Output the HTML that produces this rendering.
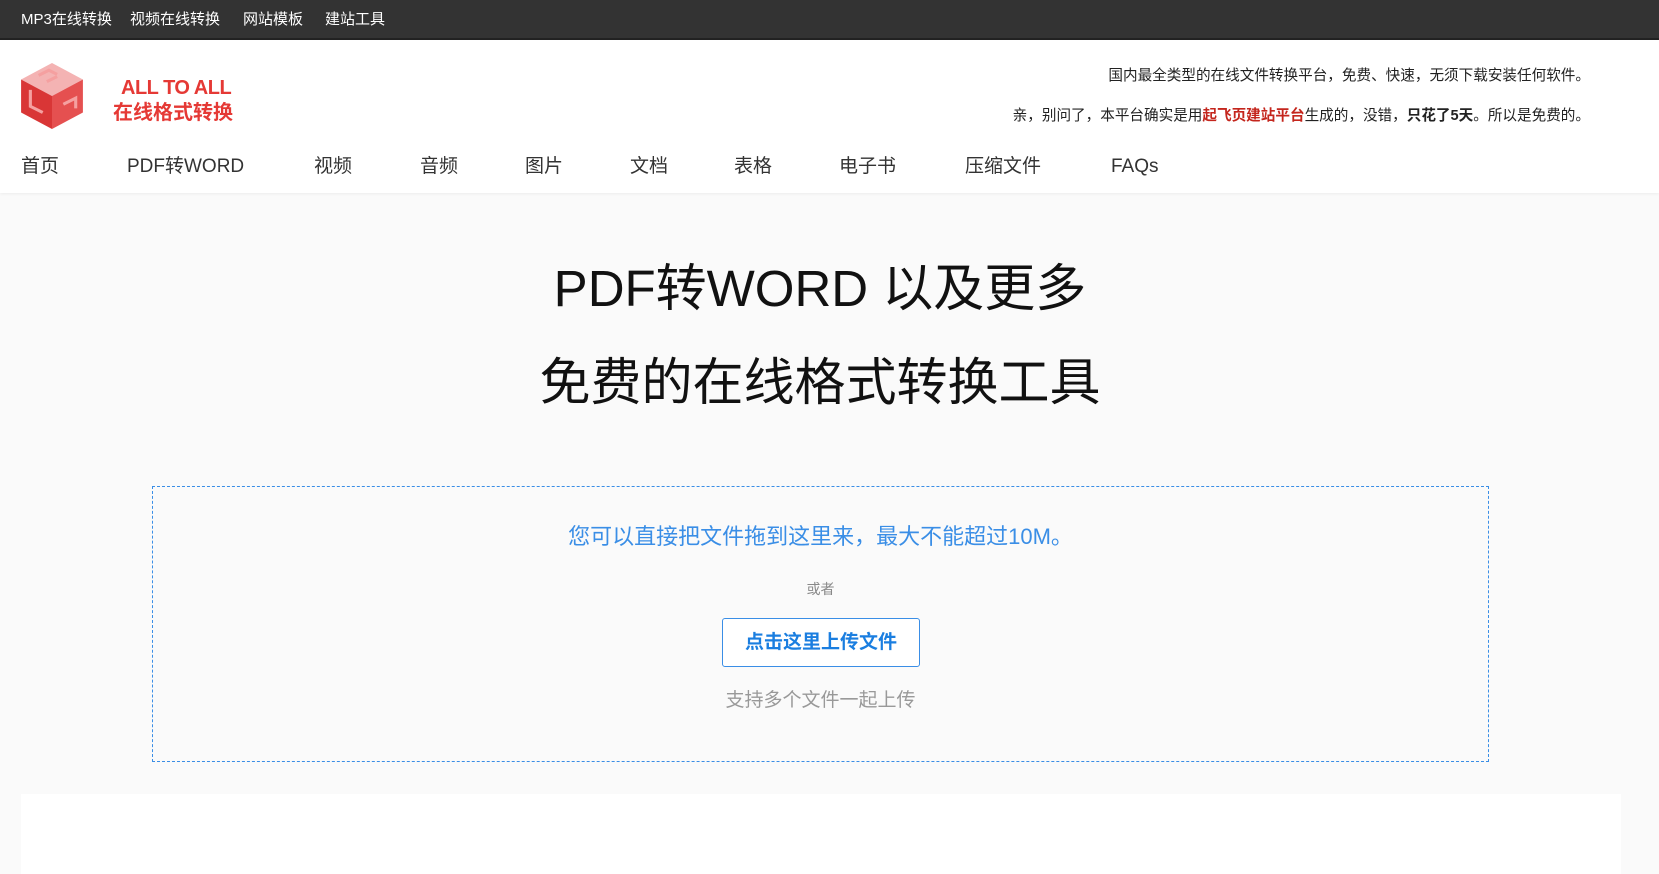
<!DOCTYPE html>
<html><head><meta charset="utf-8"><style>
*{margin:0;padding:0;box-sizing:border-box}
body{width:1659px;height:821px;overflow:hidden;background:#fafafa;font-family:"Liberation Sans","Noto Sans CJK SC",sans-serif;position:relative;line-height:1.2}
.top{height:40px;background:#333;border-bottom:2px solid #222;color:#fff;font-size:15px}
.top span{position:absolute;top:11px}
.hdr{position:absolute;top:40px;left:0;width:1659px;height:153px;background:#fff;box-shadow:0 1px 3px rgba(0,0,0,.06)}
.abs{position:absolute;white-space:nowrap}
.nav{font-size:19px;color:#333;top:155px;line-height:24px}
</style></head><body>
<div class="top"><span style="left:21px">MP3在线转换</span><span style="left:130px">视频在线转换</span><span style="left:243px">网站模板</span><span style="left:325px">建站工具</span></div>
<div class="hdr"></div>
<svg class="abs" style="left:18px;top:58px" width="68" height="74" viewBox="0 0 66 70">
<polygon points="33,4 63,20 33,36 3,20" fill="#f4b3b3"/>
<polygon points="3,20 33,36 33,68 3,52" fill="#d93636"/>
<polygon points="63,20 33,36 33,68 63,52" fill="#e55050"/>
<path d="M12,30v16l12,6M44,44l12-6v10M20,16l10-5 8,4M28,22l10-5" stroke="#f5a0a0" stroke-width="3" fill="none"/>
</svg>
<div class="abs" style="left:121px;top:76px;color:#e53935;font-size:20px;font-weight:bold;letter-spacing:-.5px">ALL TO ALL</div>
<div class="abs" style="left:113px;top:101px;color:#e53935;font-size:20px;font-weight:bold">在线格式转换</div>
<div class="abs" style="right:69px;top:68px;font-size:14.6px;color:#222">国内最全类型的在线文件转换平台，免费、快速，无须下载安装任何软件。</div>
<div class="abs" style="right:69px;top:108px;font-size:14.6px;color:#222">亲，别问了，本平台确实是用<b style="color:#c4261d">起飞页建站平台</b>生成的，没错，<b>只花了5天</b>。所以是免费的。</div>
<div class="abs nav" style="left:21px">首页</div>
<div class="abs nav" style="left:127px">PDF转WORD</div>
<div class="abs nav" style="left:314px">视频</div>
<div class="abs nav" style="left:420px">音频</div>
<div class="abs nav" style="left:525px">图片</div>
<div class="abs nav" style="left:630px">文档</div>
<div class="abs nav" style="left:734px">表格</div>
<div class="abs nav" style="left:839px">电子书</div>
<div class="abs nav" style="left:965px">压缩文件</div>
<div class="abs nav" style="left:1111px">FAQs</div>
<div class="abs" style="left:0;width:1640px;text-align:center;top:258px;font-size:51px;color:#111">PDF转WORD 以及更多</div>
<div class="abs" style="left:0;width:1640px;text-align:center;top:352px;font-size:51px;color:#111">免费的在线格式转换工具</div>
<div class="abs" style="left:152px;top:486px;width:1337px;height:276px;border:1px dashed #3a8ee6;background:#fafafa"></div>
<div class="abs" style="left:152px;width:1337px;text-align:center;top:524px;font-size:22px;color:#3a8ee6">您可以直接把文件拖到这里来，最大不能超过10M。</div>
<div class="abs" style="left:152px;width:1337px;text-align:center;top:581px;font-size:14px;color:#888">或者</div>
<div class="abs" style="left:722px;top:618px;width:198px;height:49px;border:1px solid #3a8ee6;border-radius:3px;background:#fff;color:#1a7ee0;font-size:19px;font-weight:bold;text-align:center;line-height:47px">点击这里上传文件</div>
<div class="abs" style="left:152px;width:1337px;text-align:center;top:690px;font-size:19px;color:#999">支持多个文件一起上传</div>
<div class="abs" style="left:21px;top:794px;width:1600px;height:80px;background:#fff"></div>
</body></html>
